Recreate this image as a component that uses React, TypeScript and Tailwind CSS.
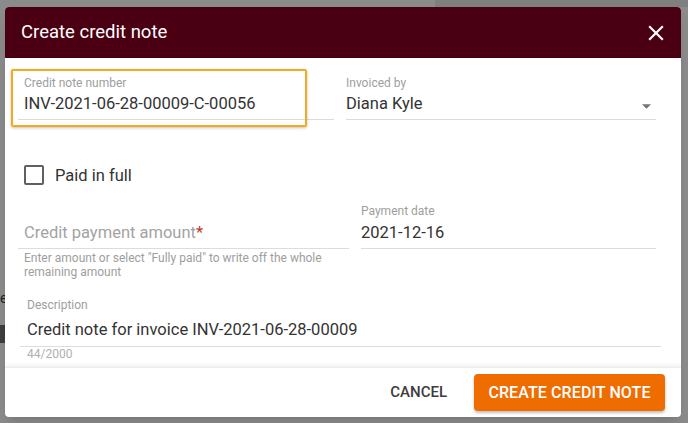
import { useState } from 'react';

function Field({
  label,
  value,
  inset = false,
  gap = 'mt-[4px]',
  className = '',
}: {
  label: string;
  value: string;
  inset?: boolean;
  gap?: string;
  className?: string;
}) {
  return (
    <div className={`border-b border-[#dcdcdc] pb-[6px] ${inset ? 'px-[6px]' : ''} ${className}`}>
      <div className="text-[12px] leading-[14px] text-[#9e9e9e]">{label}</div>
      <div className={`${gap} text-[16.5px] leading-[19px] text-[#333]`}>{value}</div>
    </div>
  );
}

export default function App() {
  const [paid, setPaid] = useState(false);

  return (
    <div
      className="relative h-[423px] w-[688px] overflow-hidden bg-[#8b8b8b]"
      style={{ fontFamily: 'Roboto, "Liberation Sans", sans-serif' }}
    >
      {/* page behind the overlay */}
      <div className="flex h-full flex-col">
        <div className="flex h-[7px]">
          <div className="w-[435px]" />
          <div className="flex-1 bg-[#7f7f7f]" />
        </div>
        <div className="mt-[283px] text-[14px] leading-[16px] text-[#222]">e</div>
        <div className="mt-[19px] h-[18px] w-[5px] bg-[#3e3e3e]" />
      </div>

      {/* dialog */}
      <div className="absolute left-[5px] top-[7px] flex h-[410px] w-[676px] flex-col overflow-hidden rounded-[4px] bg-white shadow-lg">
        <div className="flex h-[51px] shrink-0 items-center justify-between bg-[#4a0012] pl-[16px] pr-[12px]">
          <h3 className="text-[18.5px] text-white">Create credit note</h3>
          <svg width="26" height="26" viewBox="0 0 24 24" fill="white">
            <path d="M19 6.41L17.59 5 12 10.59 6.41 5 5 6.41 10.59 12 5 17.59 6.41 19 12 13.41 17.59 19 19 17.59 13.41 12z" />
          </svg>
        </div>

        <div className="relative flex-1 pl-[13px] pr-[25px] pt-[18px]">
          <div className="grid grid-cols-[316px_310px] gap-x-3">
            <Field label="Credit note number" value="INV-2021-06-28-00009-C-00056" inset />
            <div className="relative">
              <Field label="Invoiced by" value="Diana Kyle" />
              <svg
                className="absolute right-[5px] top-[28px]"
                width="9"
                height="5"
                viewBox="0 0 10 5"
                fill="#757575"
              >
                <path d="M0 0h10L5 5z" />
              </svg>
            </div>
          </div>

          {/* highlight annotation */}
          <div className="pointer-events-none absolute left-[6px] top-[11px] h-[58px] w-[296px] rounded-[2px] border-2 border-[#f2ab1f] shadow-[0_1px_3px_rgba(0,0,0,0.25)]" />

          <label className="mt-[45px] flex items-center pl-[6px]">
            <button
              onClick={() => setPaid(!paid)}
              className={`h-[20px] w-[20px] rounded-[2px] border-2 border-[#606060] ${paid ? 'bg-[#606060]' : ''}`}
            />
            <span className="ml-[11px] text-[16.5px] leading-[19px] text-[#333]">Paid in full</span>
          </label>

          <div className="mt-[19px] grid grid-cols-[331px_295px] gap-x-3">
            <div>
              <div className="border-b border-[#dcdcdc] px-[6px] pb-[6px] pt-[19px]">
                <div className="text-[16.5px] leading-[19px] text-[#a3a3a3]">
                  Credit payment amount<span className="text-[#c0392b]">*</span>
                </div>
              </div>
              <div className="mt-[2px] px-[6px] text-[12px] leading-[14px] text-[#9e9e9e]">
                Enter amount or select "Fully paid" to write off the whole remaining amount
              </div>
            </div>
            <div>
              <Field label="Payment date" value="2021-12-16" gap="mt-[5px]" />
            </div>
          </div>

          <div className="ml-[2px] mr-[-5px] mt-[19px]">
            <div className="border-b border-[#dcdcdc] px-[7px] pb-[7px]">
              <div className="text-[12px] leading-[14px] text-[#9e9e9e]">Description</div>
              <div className="mt-[8px] text-[16.5px] leading-[19px] text-[#333]">
                Credit note for invoice INV-2021-06-28-00009
              </div>
            </div>
            <div className="px-[7px] text-[12px] leading-[14px] text-[#b0b0b0]">44/2000</div>
          </div>
        </div>

        <div className="flex h-[50px] shrink-0 items-center justify-end gap-[27px] border-t border-[#ececec] pr-[16px] shadow-[0_-2px_4px_rgba(0,0,0,0.06)]">
          <button className="text-[15px] font-medium text-[#3c3c3c]">CANCEL</button>
          <button className="h-[37px] w-[191px] rounded-[4px] bg-[#ef6c00] text-[16px] font-medium tracking-[0.1px] text-white shadow-[0_2px_3px_rgba(0,0,0,0.25)]">
            CREATE CREDIT NOTE
          </button>
        </div>
      </div>
    </div>
  );
}
